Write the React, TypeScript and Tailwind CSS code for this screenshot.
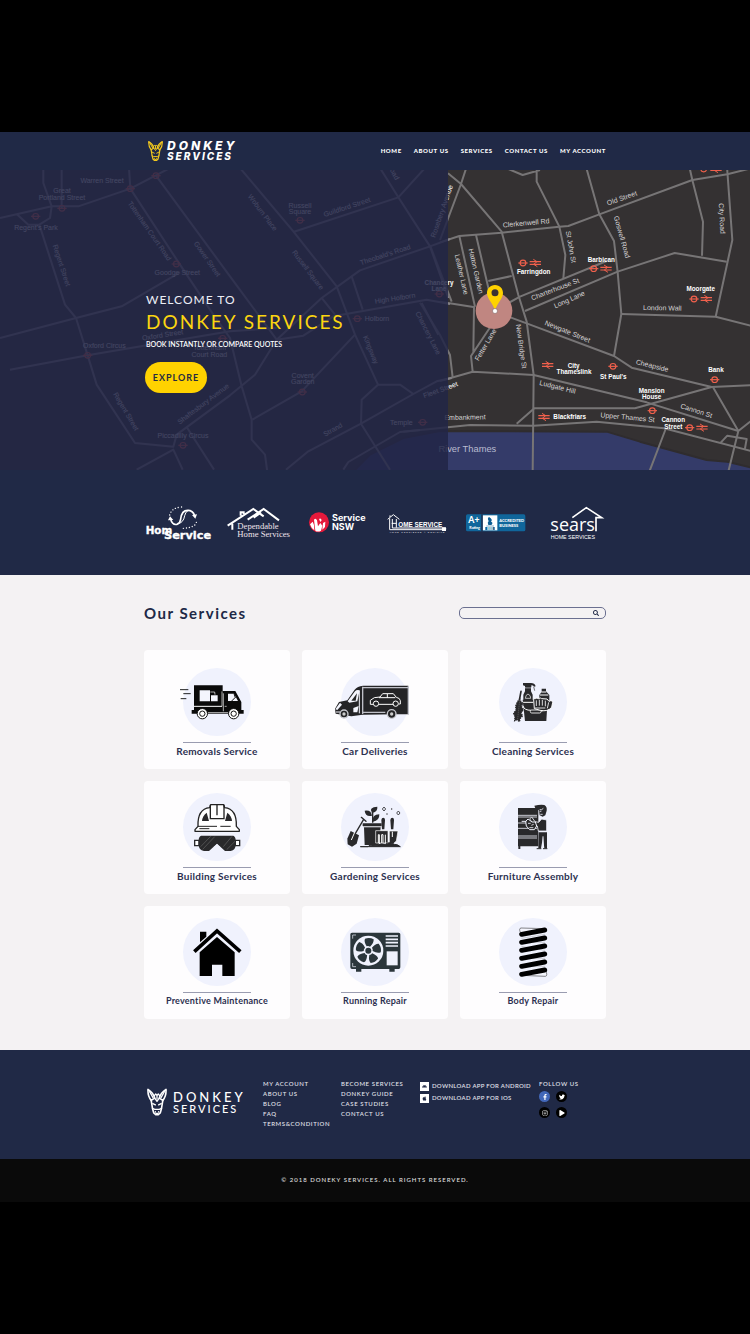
import type { ReactNode } from "react";
import { FaAndroid, FaApple, FaFacebookF, FaInstagram, FaPlay, FaSearch, FaTwitter } from "react-icons/fa";

const navLinks = ["HOME", "ABOUT US", "SERVICES", "CONTACT US", "MY ACCOUNT"];

function DonkeyHead({ className }: { className: string }) {
  return (
    <svg viewBox="34 54 62 84" className={className} fill="none" stroke="currentColor" strokeWidth="5" strokeLinejoin="round" strokeLinecap="round" aria-hidden="true">
      <path d="M37 57 Q36 78 47 91 L58 84 Q54 68 37 57Z M93 57 Q94 78 83 91 L72 84 Q76 68 93 57Z" />
      <path d="M42 64 L53 83 M88 64 L77 83" strokeWidth="4" />
      <path d="M47 91 L51 116 L55 130 L61 135 H69 L75 130 L79 116 L83 91" />
      <path d="M56 78 L61 71 L65 76 L69 71 L74 78 M58 84 L65 94 L72 84 M65 76 V86" strokeWidth="4" />
      <path d="M52 101 L60 105 M78 101 L70 105 M51 116 L58 119 H72 L79 116 M60 126 V127 M70 126 V127 M62 131 H68" strokeWidth="4" />
    </svg>
  );
}

type Label = [text: string, x: number, y: number, rotate: number];

const westLabels: Label[] = [
  ["Warren Street", 306, 46, 0],
  ["Great", 186, 76, 0],
  ["Portland Street", 186, 95, 0],
  ["Regent's Park", 108, 185, 0],
  ["Goodge Street", 532, 320, 0],
  ["Oxford Circus", 313, 540, 0],
  ["Piccadilly Circus", 549, 810, 0],
  ["Tottenham", 629, 547, 0],
  ["Court Road", 628, 567, 0],
  ["Oxford Street", 489, 508, -9],
  ["Regent Street", 178, 294, 72],
  ["Regent Street", 372, 734, 59],
  ["Tottenham Court Road", 443, 193, 55],
  ["Gower Street", 616, 277, 55],
  ["Shaftesbury Avenue", 614, 713, -37],
  ["Russell", 900, 120, 0],
  ["Square", 900, 139, 0],
  ["Guildford Street", 1043, 124, -18],
  ["Woburn Place", 782, 138, 53],
  ["Russell Square", 918, 310, 53],
  ["Theobald's Road", 1158, 267, -18],
  ["High Holborn", 1186, 398, -9],
  ["Holborn", 1131, 460, 0],
  ["Kingsway", 1106, 548, 68],
  ["Chancery Lane", 1278, 498, 63],
  ["Covent", 908, 629, 0],
  ["Garden", 908, 649, 0],
  ["Strand", 1002, 791, -29],
  ["Temple", 1204, 770, 0],
  ["Fleet Street", 1324, 672, -20],
  ["Rosebery Avenue", 1332, 132, -71],
  ["Road", 1174, 15, 62],
];

const streetLabels: Label[] = [
  ["Clerkenwell Rd", 259, 181, -5],
  ["Old Street", 548, 106, -19],
  ["St John St", 386, 247, 80],
  ["Goswell Road", 539, 218, 74],
  ["City Road", 839, 161, 87],
  ["Leather Lane", 58, 330, 77],
  ["Hatton Garden", 101, 320, 77],
  ["Charterhouse St", 348, 379, -21],
  ["Long Lane", 391, 410, -24],
  ["London Wall", 667, 436, 1],
  ["Newgate Street", 380, 506, 22],
  ["New Bridge St", 237, 545, 82],
  ["Fetter Lane", 143, 543, -59],
  ["Cheapside", 635, 609, 14],
  ["Ludgate Hill", 351, 673, 14],
  ["Cannon St", 767, 744, 18],
  ["Upper Thames St", 562, 764, 5],
  ["Embankment", 75, 764, -1],
];

const stationLabels: Label[] = [
  ["Farringdon", 281, 327, 0],
  ["Barbican", 484, 292, 0],
  ["Moorgate", 782, 379, 0],
  ["City", 401, 608, 0],
  ["Thameslink", 402, 628, 0],
  ["St Paul's", 520, 642, 0],
  ["Bank", 828, 622, 0],
  ["Mansion", 635, 684, 0],
  ["House", 635, 702, 0],
  ["Blackfriars", 389, 763, 0],
  ["Cannon", 700, 772, 0],
  ["Street", 700, 792, 0],
  ["Chancery", -3, 360, 0],
  ["Lane", -3, 379, 0],
];

const westTubes = [[186, 121], [107, 145], [391, 62], [468, 23], [529, 288], [263, 562], [668, 511], [549, 832], [900, 157], [1072, 452], [907, 672], [1268, 763], [1318, 378]];
const eastTubes = [[249, 294], [461, 311], [762, 402], [519, 604], [824, 644], [637, 737], [749, 788], [791, 12]];
const eastRails = [[286, 294], [498, 311], [799, 402], [323, 600], [312, 756], [786, 788], [828, 12]];

function MapLabels({ labels }: { labels: Label[] }) {
  return (
    <>
      {labels.map(([text, x, y, rotate]) => (
        <text key={`${text}-${x}-${y}`} transform={`translate(${x} ${y}) rotate(${rotate})`} textAnchor="middle">
          {text}
        </text>
      ))}
    </>
  );
}

function Tube({ x, y }: { x: number; y: number }) {
  return (
    <g transform={`translate(${x} ${y})`} stroke="#f0604c" strokeWidth="3.5" fill="none">
      <circle r="8.5" />
      <path d="M-14 0 H14" />
    </g>
  );
}

function Rail({ x, y }: { x: number; y: number }) {
  return (
    <g transform={`translate(${x} ${y})`} stroke="#f0604c" strokeWidth="3.5" fill="none">
      <path d="M-17 -4 H17 M-17 4 H17" />
      <path d="M-6 -11 L5 -4 L-5 4 L6 11" strokeWidth="3" />
    </g>
  );
}

function LondonMap() {
  return (
    <svg viewBox="0 0 750 300" preserveAspectRatio="xMidYMid slice" className="absolute inset-0 h-full w-full font-['Liberation_Sans',Arial,sans-serif]" aria-hidden="true">
      <rect width="750" height="300" fill="#343132" />
      <g transform="translate(440 -5) scale(0.33333)" fill="none" stroke="#777576" strokeWidth="6" strokeLinejoin="round">
        <path d="M-260 920 L-210 869 L-110 819 L0 798 L500 800 L600 830 L800 885 L862 890 L935 908 V925 H-260Z" fill="#343b69" stroke="#2f2c2e" />
        <path d="M24 25 L63 57 L185 200 L235 390 L260 470 L281 630 L278 920 M80 5 L63 57 L0 225" />
        <path d="M0 232 L58 213 L185 203 L358 185 L385 183 L478 148 L757 45 L862 28 L940 8" />
        <path d="M58 213 L105 425 M108 210 L150 390 M145 348 L215 333" />
        <path d="M290 15 V50 L358 185 L376 270 L370 340 M205 12 L248 30 L300 15" />
        <path d="M438 5 L478 148 L522 228 L533 322 L544 447 L522 573" />
        <path d="M205 414 L240 395 L500 288 M255 438 L533 320 L704 264 L860 290" />
        <path d="M748 5 L757 45 L789 170 L786 272 M861 5 L877 225 L827 455 M544 447 L827 455 L940 484" />
        <path d="M0 410 L105 427 M102 427 L100 560 M165 465 L93 573 L98 620" />
        <path d="M0 648 L98 620 L281 630 L620 712 L895 798 M200 453 L260 475 L522 573 L575 608 L815 666 L940 660" />
        <path d="M815 666 L585 730 H283 L230 776 M820 668 L895 798 L865 920 M895 798 L940 762" />
        <path d="M-110 800 L90 780 L281 782 L470 770 L672 790 L940 860 M677 792 L628 920 M840 835 L862 812 L920 822 L915 850" />
        <path d="M-60 413 L0 510 L30 570 L38 637 M-30 240 L35 410" />
      </g>
      <g transform="translate(0 -2) scale(0.33333)" fill="none" stroke="#858388" strokeWidth="6" strokeLinejoin="round">
        <path d="M0 150 L155 115 H235 L391 62 L510 0 M130 0 V45 L155 115 L150 150 L118 170 H85 L50 138 M185 0 V121" />
        <path d="M387 0 L391 62 L540 290 L640 440 L690 510 L725 655 L755 755 V815 L795 860 L802 912" />
        <path d="M468 23 L690 325 L830 515 M720 0 L880 190 L1010 355 L1065 500 L1134 650" />
        <path d="M118 170 L195 410 L228 450 L263 562 L290 650 L405 825 L520 836 L530 800 L690 682 L765 620 L830 515 L965 390 L1080 307 L1290 235 L1350 213" />
        <path d="M0 510 L228 450 L365 415 L540 313 M30 605 L263 562 L690 490 L830 480 M410 905 L520 845 L548 905 M560 777 L642 905" />
        <path d="M880 192 L1195 88 L1275 0 M1140 0 L1195 88 L1290 235 L1345 390" />
        <path d="M830 515 L910 503 L1000 445 L1280 395 L1350 408 M1055 325 L1088 425 M965 390 L1005 440" />
        <path d="M757 755 L905 670 L1065 500 M858 905 L925 850 L1083 767 L1240 678 L1310 640 L1355 630 M1134 650 L1085 695 L1083 767 L1170 905 M1134 650 H1200 L1240 678" />
        <path d="M1030 905 L1045 882 L1200 792 L1260 786 M1265 405 L1315 500" />
      </g>
      <g transform="translate(0 -2) scale(0.33333)" fill="#ffffff" fontSize="21">
        {westTubes.map(([x, y]) => <Tube key={`${x}-${y}`} x={x} y={y} />)}
        <MapLabels labels={westLabels} />
      </g>
      <g transform="translate(440 -5) scale(0.33333)">
        {eastTubes.map(([x, y]) => <Tube key={`${x}-${y}`} x={x} y={y} />)}
        {eastRails.map(([x, y]) => <Rail key={`${x}-${y}`} x={x} y={y} />)}
        <g fill="#d6d4d5" fontSize="21"><MapLabels labels={streetLabels} /></g>
        <g fill="#ffffff" fontSize="19" fontWeight="700"><MapLabels labels={stationLabels} /></g>
        <text x="82" y="860" textAnchor="middle" fontSize="28" fill="#b9bbd0">River Thames</text>
        <circle cx="162" cy="437" r="55" fill="#c08681" />
        <path d="M165 360 C150 360 141 371 141 384 C141 400 158 414 165 436 C172 414 189 400 189 384 C189 371 180 360 165 360Z" fill="#ffd200" />
        <circle cx="165" cy="383" r="10.500" fill="#3b3133" />
        <circle cx="165" cy="438" r="7.500" fill="#ffffff" stroke="#6a4b4b" strokeWidth="1.500" />
      </g>
      <rect width="448" height="300" fill="#222647" fillOpacity="0.85" />
    </svg>
  );
}

function Logo({ name, view, children }: { name: string; view: string; children: ReactNode }) {
  return (
    <li>
      <svg viewBox={view} role="img" aria-label={name} className="w-full" fill="#ffffff">
        {children}
      </svg>
    </li>
  );
}

function Partners() {
  return (
    <section aria-label="Partners" className="bg-[#202946] pt-[33px] pb-8">
      <ul className="mx-auto grid max-w-[462px] grid-cols-6">
        <Logo name="Hom Service" view="27 24 231 120">
          <g fill="none" stroke="#ffffff" strokeLinecap="round">
            <path d="M107 73 Q112 91 126 88 Q136 84 137 72 Q140 46 158 46 Q174 46 179 62" strokeWidth="5" />
            <path d="M126 88 Q146 84 149 62 Q151 50 160 46" strokeWidth="3" />
            <path d="M104 60 Q110 38 140 36 M184 82 Q180 98 144 100" strokeWidth="4" strokeDasharray="0.1 9" />
          </g>
          <path d="M99 76 L105 64 L115 75Z M171 60 L186 58 L181 71Z" />
          <g fontFamily="DejaVu Sans, sans-serif" fontWeight="700">
            <text x="32" y="116" fontSize="31" stroke="#ffffff" strokeWidth="1">Hom</text>
            <text x="87" y="132" fontSize="34" stroke="#ffffff" strokeWidth="1">Service</text>
          </g>
        </Logo>
        <Logo name="Dependable Home Services" view="258 24 231 120">
          <path d="M278 92 L355 42 L386 64 M292 86 V104 M317 62 V52 H326 V57 M338 74 L386 42 L432 76 M356 68 L378 52" fill="none" stroke="#ffffff" strokeWidth="6" />
          <g fontFamily="Liberation Serif, serif" fontSize="26" fill="#efe3ea">
            <text x="307" y="103">Dependable</text>
            <text x="307" y="127">Home Services</text>
          </g>
        </Logo>
        <Logo name="Service NSW" view="489 24 231 120">
          <circle cx="552" cy="82" r="30" fill="#e5193b" />
          <path d="M525 88 L533 80 L537 90 L538 106 Q529 101 525 88Z M537 74 Q542 67 546 76 L549 94 L556 84 L562 92 L558 107 Q548 112 541 107Z M564 84 L571 80 L570 96 L562 104Z M552 72 Q558 68 560 76 L556 81Z" />
          <g fontFamily="Inter, sans-serif" fontWeight="700" fontSize="27">
            <text x="591" y="79">Service</text>
            <text x="591" y="104">NSW</text>
          </g>
        </Logo>
        <Logo name="Home Service" view="0 24 231 120">
          <path d="M38 73 L55 59 L73 73 M44 70 V104 H212 V99 H52 V72 M64 72 V98 M50 85 H64 M45 66 V61" fill="none" stroke="#ffffff" strokeWidth="3" />
          <rect x="201" y="97" width="12" height="11" />
          <text x="70" y="97" fontFamily="Liberation Sans, sans-serif" fontWeight="700" fontSize="19">OME SERVICE</text>
          <text x="44" y="114" fontFamily="Liberation Sans, sans-serif" fontSize="6" letterSpacing="3">HOME CONCIERGE À DOMICILE</text>
        </Logo>
        <Logo name="A+ Rating, BBB Accredited Business" view="231 24 231 120">
          <rect x="273" y="58" width="178" height="51" rx="5" fill="#10669b" />
          <path d="M323 61 H367 V106 H323Z" />
          <rect x="319" y="58" width="4" height="51" fill="#202946" />
          <path d="M342 66 Q355 74 348 80 Q356 83 349 90 H340 Q336 82 341 78 Q336 71 342 66Z M334 92 H357 V94 H334Z" fill="#0d5e94" />
          <rect x="331" y="96" width="28" height="9" fill="#0d5e94" />
          <g fontFamily="Lato, sans-serif" fontWeight="900">
            <text x="280" y="85" fontSize="26">A+</text>
            <text x="283" y="103" fontSize="11">Rating</text>
            <text x="336" y="104" fontSize="9">BBB</text>
            <text x="373" y="82" fontSize="12">ACCREDITED</text>
            <text x="373" y="95" fontSize="12">BUSINESS</text>
          </g>
        </Logo>
        <Logo name="Sears Home Services" view="462 24 231 120">
          <text x="526" y="109" fontFamily="Open Sans, sans-serif" fontWeight="400" fontSize="54">sears</text>
          <path d="M592 68 L634 38 L680 68 H663 V109" fill="none" stroke="#ffffff" strokeWidth="5" />
          <text x="527" y="131" fontFamily="Liberation Sans, sans-serif" fontSize="16">HOME SERVICES</text>
        </Logo>
      </ul>
    </section>
  );
}

const removalsIcon = (
  <>
    <path d="M136 285 H161 M146 297 H168 M138 312 H155" stroke="#222" strokeWidth="3" />
    <path d="M178 272 H264 V289 H302 L320 322 V346 H327 V357 H171 V346 H178Z" fill="#0a0a0a" />
    <path d="M178 335 H262" stroke="#fff" strokeWidth="3" />
    <path d="M195 287 H226 V320 H195Z M229 302 H249 V320 H229Z" fill="#f4f5fd" />
    <path d="M227 292 H240 L241 300 M229 306 H239 V311 M262 290 V335" stroke="#fff" strokeWidth="2" fill="none" />
    <path d="M280 297 H298 L310 319 H280Z" fill="#f4f5fd" />
    <path d="M292 318 L299 309 M270 335 H276 M266 296 V350" stroke="#fff" strokeWidth="2" />
    <path d="M302 308 L291 319 M298 297 L302 309" stroke="#111" strokeWidth="3" />
    <g fill="#fff" stroke="#111" strokeWidth="3">
      <circle cx="203" cy="357" r="15.500" /><circle cx="203" cy="357" r="8" /><circle cx="297" cy="357" r="15.500" /><circle cx="297" cy="357" r="8" />
    </g>
    <path d="M220 354 H280" stroke="#bbb" strokeWidth="3" />
  </>
);

const deliveriesIcon = (
  <>
    <path d="M601 342 L613 322 L638 317 L660 285 Q668 275 685 273 H821 V359 H786 L684 360 L650 365 L603 357Z" fill="#242426" />
    <path d="M686 279 H819 M686 353 H752 M821 274 V360 M684 276 V358" stroke="#bfc0c8" strokeWidth="4" />
    <path d="M639 320 L661 290 Q666 284 675 287 L668 320 L644 324Z M656 340 L672 334 L668 353 H656Z M602 344 L616 324 L622 330 L608 346Z" fill="#f4f5fd" />
    <path d="M650 318 L667 296 L663 318Z" fill="#242426" />
    <path d="M674 288 V356 M604 352 H616" stroke="#f4f5fd" strokeWidth="3" />
    <g fill="none" stroke="#fff" strokeWidth="3">
      <path d="M715 329 H707 V317 L719 309 L736 307 L744 297 H776 L785 308 Q796 310 797 318 V328 H792 M733 329 H776 M733 309 H782 M758 298 V309" />
      <circle cx="724" cy="327" r="8" /><circle cx="783" cy="327" r="8" />
    </g>
    <g fill="#242426" stroke="#c8c9cf" strokeWidth="4">
      <circle cx="628" cy="358" r="12" /><circle cx="771" cy="358" r="13" />
    </g>
    <circle cx="628" cy="358" r="5" fill="#ccc" /><circle cx="771" cy="358" r="5" fill="#ccc" />
  </>
);

const cleaningIcon = (
  <>
    <path d="M250 265 H274 Q285 265 288 275 L284 276 Q280 272 275 272 V278 H256 V274 L250 272Z M256 281 H274 V290 L279 300 V318 H251 V300 L256 290Z" fill="#29292b" />
    <path d="M282 276 L285 288 M257 279 H274 M256 292 H274" stroke="#29292b" strokeWidth="2" />
    <path d="M257 311 Q258 300 265 298 Q274 302 273 311Z" fill="none" stroke="#fff" strokeWidth="2" />
    <path d="M306 282 H319 V290 L329 301 V320 H299 V301 L306 291Z" fill="#29292b" />
    <path d="M305 292 H320 M301 301 H326" stroke="#fff" strokeWidth="3" />
    <path d="M249 315 H324 L320 379 H256Z" fill="#29292b" />
    <path d="M250 323 H281 M250 334 Q253 347 275 347 M300 349 Q316 350 323 338" fill="none" stroke="#fff" strokeWidth="3" />
    <rect x="272" y="346" width="32" height="9" rx="4" fill="#29292b" stroke="#fff" strokeWidth="2.500" />
    <path d="M282 315 Q282 310 287 312 Q292 308 296 312 Q303 308 306 312 L322 313 L328 320 Q337 315 339 323 L336 338 Q324 352 302 347 L284 342Z" fill="#29292b" stroke="#fff" strokeWidth="3" />
    <path d="M290 317 V334 M299 315 V333 M308 316 V333 M317 318 V335 M286 340 H317 M327 323 L323 341" stroke="#fff" strokeWidth="2.500" />
    <path d="M244 290 L240 312" stroke="#29292b" strokeWidth="5" strokeLinecap="round" />
    <path d="M240 312 L233 322 L228 334 L229 346 L222 356 L226 367 L225 378 L233 375 L239 381 L242 371 L249 364 L244 355 L251 345 L245 335 L250 326 L244 321Z" fill="#29292b" stroke="#29292b" strokeWidth="4" strokeDasharray="4 3" />
    <path d="M240 317 L234 373" stroke="#777" strokeWidth="2" strokeDasharray="3 3" />
  </>
);

const buildingIcon = (
  <>
    <path d="M190 155 Q188 103 225 99 L228 90 H267 L270 99 Q307 103 305 155 L314 165 V170 H181 V165Z" fill="#fff" stroke="#222" strokeWidth="4" strokeLinejoin="round" />
    <path d="M227 90 V132 H268 V90 M247 91 V122" fill="none" stroke="#222" strokeWidth="4" />
    <path d="M202 139 Q203 124 216 114 L223 139Z M292 139 Q291 124 278 114 L271 139Z" fill="#29292b" />
    <path d="M190 155 H247 M257 155 H288 M194 162 H224" stroke="#222" strokeWidth="3" />
    <path d="M180 197 H193 V213 H180Z M302 197 H315 V213 H302Z" fill="#fff" stroke="#29292b" strokeWidth="4" />
    <path d="M199 183 H296 Q303 186 303 197 V210 Q303 226 288 229 H271 L247 207 L223 229 H208 Q192 226 192 210 V197 Q192 186 199 183Z" fill="#29292b" />
    <path d="M198 216 L228 185 M204 224 L240 186 M266 216 L292 185 M276 225 L301 200" stroke="#656565" strokeWidth="2" />
    <path d="M247 208 Q242 214 236 218 H258 Q251 214 247 208" fill="#f0f2fd" />
  </>
);

const gardeningIcon = (
  <>
    <path d="M680 128 L694 140 M687 134 L660 180" stroke="#29292b" strokeWidth="4" strokeLinecap="round" />
    <path d="M648 169 L673 182 L666 207 L652 216 L639 209 L638 192Z" fill="#29292b" />
    <path d="M660 173 L650 196" stroke="#fff" strokeWidth="3" />
    <path d="M684 146 H741 V154 H684Z M688 158 H738 L732 211 H690Z" fill="#29292b" />
    <path d="M685 156 H740" stroke="#999" strokeWidth="2" />
    <path d="M714 144 V112" stroke="#29292b" strokeWidth="4" />
    <path d="M712 123 Q692 127 690 108 Q710 105 712 123Z M711 112 Q702 98 728 96 Q730 112 711 115Z M715 137 Q712 120 734 119 Q735 138 715 141Z" fill="#29292b" />
    <path d="M740 136 Q741 129 746 129 Q752 130 751 137 L749 164 H742Z M767 136 Q768 129 773 129 Q779 130 778 137 L776 164 H769Z" fill="#29292b" />
    <path d="M723 168 H760 V205 H723Z M764 169 H790 L785 199 L776 207 H764Z" fill="#29292b" stroke="#fff" strokeWidth="2" />
    <path d="M731 205 V180 H734 V205 M741 205 V180 H745 V205 M752 205 V180 M773 171 V187" stroke="#fff" strokeWidth="3" fill="none" />
    <path d="M677 216 H797 Q789 209 779 209 Q765 199 752 209 Q738 205 728 212 Q704 208 700 216Z" fill="#29292b" stroke="#29292b" strokeWidth="3" />
    <path d="M748 97 L753 103 L748 109 L743 103Z M791 109 L796 115 L791 121 L786 115Z" fill="none" stroke="#29292b" strokeWidth="2.500" />
    <circle cx="771" cy="103" r="2" fill="#29292b" /><circle cx="757" cy="118" r="2" fill="#29292b" />
  </>
);

const furnitureIcon = (
  <>
    <path d="M235 100 H296 V215 H235Z M236 215 H242 V223 H236Z" fill="#29292b" />
    <path d="M235 122 H292 M235 127 H292 M235 145 H263 M235 161 H292 M235 184 H292 M235 190 H292" stroke="#e8e9f3" strokeWidth="2.500" />
    <path d="M284 93 Q302 89 314 91 Q323 96 321 108 L317 122 L309 126 L300 122 L298 107 L287 101Z" fill="#29292b" />
    <path d="M300 105 H306 L311 101 M300 110 H305 M302 119 H309" stroke="#f0f2fd" strokeWidth="2.500" />
    <path d="M297 143 L306 133 L321 136 V169 H296 L293 154 L281 148 L270 133 L276 127 L286 141Z" fill="#29292b" stroke="#f0f2fd" strokeWidth="2.500" />
    <path d="M297 173 H322 V221 H314 L310 188 L304 221 H296Z" fill="#29292b" />
    <path d="M310 185 V220" stroke="#f0f2fd" strokeWidth="3" />
    <path d="M246 140 H260 M258 140 L265 133 L277 142 H287 L291 154 L284 165 H270 L260 154Z" fill="#29292b" stroke="#f0f2fd" strokeWidth="3" />
    <path d="M265 146 H273 M275 152 L282 149 M269 159 H281" stroke="#f0f2fd" strokeWidth="2.500" />
    <path d="M291 222 H305 M310 222 H323" stroke="#29292b" strokeWidth="3" />
  </>
);

const houseIcon = (
  <>
    <path d="M196 471 H215 V486 L196 503Z" fill="#000" />
    <path d="M179 531 L247 469 L317 531" fill="none" stroke="#000" strokeWidth="11" />
    <path d="M195 533 L247 487 L300 533 V604 H263 V570 H232 V604 H195Z" fill="#000" />
  </>
);

const conditionerIcon = (
  <>
    <path d="M652 474 H792 Q797 474 797 479 V578 Q797 583 792 583 H780 V591 H764 V583 H680 V591 H664 V583 H652 Q647 583 647 578 V479 Q647 474 652 474Z" fill="#2b363b" />
    <circle cx="701" cy="528" r="45" fill="#f0f2fd" />
    <g fill="#2b363b">
      <circle cx="701" cy="528" r="9" />
      {[0, 72, 144, 216, 288].map((angle) => (
        <path key={angle} transform={`rotate(${angle} 701 528)`} d="M696 515 Q687 500 691 492 Q705 487 717 494 Q718 505 706 516 Q701 513 696 515Z" />
      ))}
    </g>
    <path d="M753 484 H790 M753 494 H790 M753 504 H790 M753 514 H790" stroke="#f0f2fd" strokeWidth="5" />
    <rect x="756" y="530" width="33" height="42" fill="#f0f2fd" />
    <path d="M654 492 V481 H664 M654 565 V576 H664" fill="none" stroke="#f0f2fd" strokeWidth="2" />
  </>
);

const springIcon = (
  <>
    <path d="M242 473 Q237 461 244 460 L314 462 M318 587 Q325 604 317 605 L246 602" fill="#f4f5fd" stroke="#111" strokeWidth="1.500" />
    <path d="M245 491 L316 479 M245 503 L316 503 M245 515 L316 527 M245 551 L316 551 M245 575 L316 575" stroke="#888" strokeWidth="1" />
    <path d="M246 479 L315 466 M246 503 L315 490 M246 527 L315 514 M246 551 L315 538 M246 575 L315 562 M246 599 L315 586" stroke="#000" strokeWidth="15" strokeLinecap="round" />
  </>
);

const services = [
  { title: "Removals Service", view: "121 220 252 204", icon: removalsIcon, featured: true },
  { title: "Car Deliveries", view: "595 220 252 204", icon: deliveriesIcon, featured: true },
  { title: "Cleaning Services", view: "154 220 252 204", icon: cleaningIcon, featured: true },
  { title: "Building Services", view: "121 55 252 204", icon: buildingIcon },
  { title: "Gardening Services", view: "595 55 252 204", icon: gardeningIcon },
  { title: "Furniture Assembly", view: "154 55 252 204", icon: furnitureIcon },
  { title: "Preventive Maintenance", view: "121 430 252 204", icon: houseIcon, compact: true },
  { title: "Running Repair", view: "595 430 252 204", icon: conditionerIcon, compact: true },
  { title: "Body Repair", view: "154 430 252 204", icon: springIcon, compact: true },
];

function Services() {
  return (
    <main className="bg-[#f4f2f3] pt-7 pb-[31px]">
      <div className="mx-auto max-w-[462px]">
        <div className="flex items-center justify-between">
          <h2 className="text-[15px] leading-5 font-bold tracking-widest text-[#202946]">Our Services</h2>
          <form role="search" className="flex h-3 w-[147px] items-center rounded-[5px] border border-[#6b7090] pr-1.5 pl-2" onSubmit={(e) => e.preventDefault()}>
            <input type="search" aria-label="Search services" className="min-w-0 flex-1 bg-transparent text-[7px] leading-none outline-none" />
            <button type="submit" aria-label="Search" className="text-[#202946]">
              <FaSearch className="size-1.5" />
            </button>
          </form>
        </div>
        <ul className="mt-[27px] grid grid-cols-3 gap-3">
          {services.map((s) => (
            <li key={s.title} className={`flex flex-col items-center rounded-[4px] bg-[#fefdfe] pb-2.5 ${s.featured ? "pt-[18px]" : "pt-3"}`}>
              <div className="flex size-[68px] items-center justify-center rounded-full bg-[#f0f2fd]">
                <svg viewBox={s.view} className="h-[68px] w-[84px] shrink-0" fill="none" aria-hidden="true">{s.icon}</svg>
              </div>
              <div className="mt-1.5 h-px w-[68px] bg-[#9a9cb0]" />
              <h3 className={`leading-4 font-bold tracking-wide text-[#2c3050] ${s.compact ? "text-[9px]" : "text-[10px]"}`}>{s.title}</h3>
            </li>
          ))}
        </ul>
      </div>
    </main>
  );
}

function FooterLinks({ label, links }: { label: string; links: string[] }) {
  return (
    <nav aria-label={label}>
      <ul>
        {links.map((link) => (
          <li key={link} className="leading-[10px]"><a href="#">{link}</a></li>
        ))}
      </ul>
    </nav>
  );
}

const socials = [
  { name: "Facebook", icon: <FaFacebookF />, color: "bg-[#4267b8]" },
  { name: "Twitter", icon: <FaTwitter />, color: "bg-black" },
  { name: "Instagram", icon: <FaInstagram />, color: "bg-black" },
  { name: "YouTube", icon: <FaPlay />, color: "bg-black" },
];

function Footer() {
  return (
    <footer>
      <div className="bg-[#202946] pt-[29px] pb-[30px]">
        <div className="mx-auto grid max-w-[462px] grid-cols-[119px_78px_79px_119px_1fr] text-[6px] font-medium tracking-widest whitespace-nowrap text-[#e6e7ef]">
          <div className="flex items-center gap-1.5 self-center pb-1 pl-[3px] text-white">
            <DonkeyHead className="h-7 w-5" />
            <div>
              <p className="text-[13px] leading-[12px] tracking-[3px]">DONKEY</p>
              <p className="text-[11px] leading-[11px] tracking-[2px]">SERVICES</p>
            </div>
          </div>
          <FooterLinks label="Site" links={["MY ACCOUNT", "ABOUT US", "BLOG", "FAQ", "TERMS&CONDITION"]} />
          <FooterLinks label="Company" links={["BECOME SERVICES", "DONKEY GUIDE", "CASE STUDIES", "CONTACT US"]} />
          <ul className="space-y-0.5 pt-0.5 tracking-wider">
            <li>
              <a href="#" className="flex items-center gap-[3px] leading-[10px]">
                <span className="flex size-[9px] items-center justify-center bg-white text-[5px] text-[#202946]"><FaAndroid /></span>
                DOWNLOAD APP FOR ANDROID
              </a>
            </li>
            <li>
              <a href="#" className="flex items-center gap-[3px] leading-[10px]">
                <span className="flex size-[9px] items-center justify-center bg-white text-[5px] text-[#202946]"><FaApple /></span>
                DOWNLOAD APP FOR IOS
              </a>
            </li>
          </ul>
          <div>
            <h2 className="leading-[10px]">FOLLOW US</h2>
            <ul className="mt-0.5 grid w-7 grid-cols-2 gap-x-1.5 gap-y-[5px]">
              {socials.map((s) => (
                <li key={s.name}>
                  <a href="#" aria-label={s.name} className={`flex size-[11px] items-center justify-center rounded-full text-[6px] text-white ${s.color}`}>{s.icon}</a>
                </li>
              ))}
            </ul>
          </div>
        </div>
      </div>
      <p className="bg-[#0a0a0a] pt-[15px] pb-[17px] text-center text-[6px] leading-[11px] font-medium tracking-[1px] text-[#e0e0e0]">
        © 2018 DONEKY SERVICES. ALL RIGHTS RESERVED.
      </p>
    </footer>
  );
}

export default function App() {
  return (
    <div className="min-h-screen bg-black py-[132px] font-[Lato,'Open_Sans',sans-serif]">
      <header className="bg-[#202946] py-2">
        <div className="mx-auto flex max-w-[462px] items-center justify-between text-white">
          <a href="#" className="flex items-center gap-1 pl-1">
            <DonkeyHead className="h-[22px] w-[15px] text-[#f2c81e]" />
            <span className="font-[Inter,sans-serif] font-extrabold italic">
              <span className="block text-[12px] leading-[11px] tracking-[3px]">DONKEY</span>
              <span className="block text-[10px] leading-[11px] tracking-[2px]">SERVICES</span>
            </span>
          </a>
          <nav aria-label="Main">
            <ul className="flex gap-3 text-[6px] leading-3 font-black tracking-widest">
              {navLinks.map((link) => (
                <li key={link}><a href="#">{link}</a></li>
              ))}
            </ul>
          </nav>
        </div>
      </header>
      <section className="relative bg-[#252843]">
        <LondonMap />
        <div className="relative mx-auto max-w-[462px] pt-[122px] pb-[77px] pl-0.5">
          <p className="text-[12px] leading-4 tracking-[1px] text-[#eceef6]">WELCOME TO</p>
          <h1 className="mt-0.5 text-[19px] leading-6 tracking-[2px] text-[#fbd510]">DONKEY SERVICES</h1>
          <p className="mt-1 text-[7px] leading-3 font-semibold text-white">BOOK INSTANTLY OR COMPARE QUOTES</p>
          <button type="button" className="mt-3 -ml-px flex h-[31px] w-[62px] items-center justify-center rounded-full bg-[#ffd200] text-[9px] font-bold tracking-[1px] text-[#262b40]">EXPLORE</button>
        </div>
      </section>
      <Partners />
      <Services />
      <Footer />
    </div>
  );
}
